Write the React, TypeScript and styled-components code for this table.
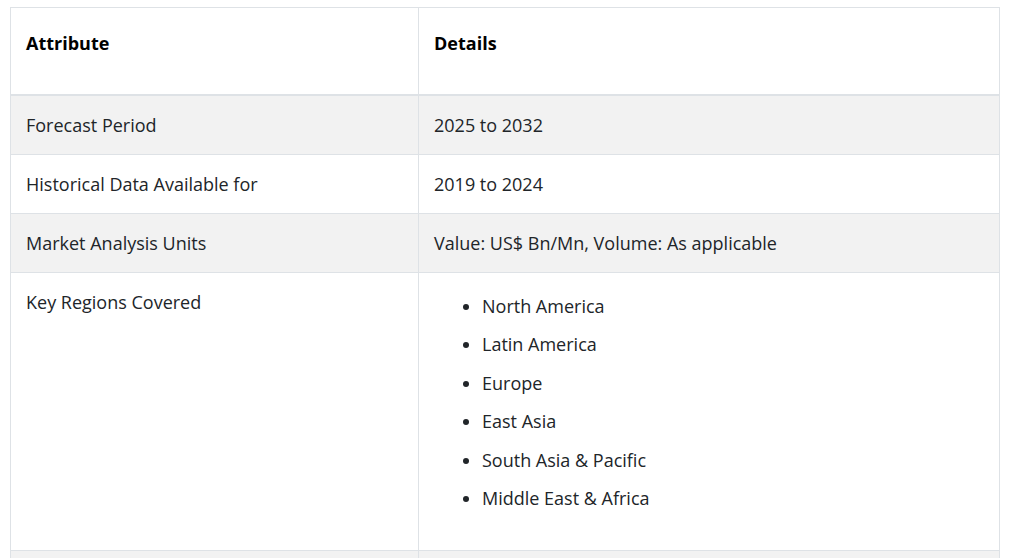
import React from "react";
import styled, { createGlobalStyle } from "styled-components";

const Global = createGlobalStyle`
  html, body { margin: 0; padding: 0; background: #fff; }
  body { font-family: "Open Sans", "Noto Sans", sans-serif; color: #212529; }
`;

const Page = styled.div`
  padding: 7px 0 0 10px;
`;

const Table = styled.table`
  width: 990px;
  border-collapse: collapse;
  table-layout: fixed;
  font-size: 18px;
  line-height: 24px;
`;

const HeadCell = styled.th`
  text-align: left;
  font-weight: 700;
  color: #000;
  padding: 23px 15px 39px;
  border: 1px solid #dee2e6;
  border-bottom: 2px solid #dee2e6;
  vertical-align: top;
`;

const Row = styled.tr<{ $shade?: boolean }>`
  background: ${(p) => (p.$shade ? "#f2f2f2" : "#fff")};
`;

const Cell = styled.td`
  padding: 17px 15px;
  border: 1px solid #dee2e6;
  vertical-align: top;
  height: 24px;
`;

const List = styled.ul`
  margin: 4px 0 0;
  padding: 0 0 9px 48px;
  list-style: disc;
`;

const Item = styled.li`
  margin-bottom: 14.4px;
  padding-left: 0;
`;

const rows = [
  ["Forecast Period", "2025 to 2032"],
  ["Historical Data Available for", "2019 to 2024"],
  ["Market Analysis Units", "Value: US$ Bn/Mn, Volume: As applicable"],
];

const regions = [
  "North America",
  "Latin America",
  "Europe",
  "East Asia",
  "South Asia & Pacific",
  "Middle East & Africa",
];

export default function App() {
  return (
    <Page>
      <Global />
      <Table>
        <colgroup>
          <col style={{ width: 408 }} />
          <col />
        </colgroup>
        <thead>
          <tr>
            <HeadCell>Attribute</HeadCell>
            <HeadCell>Details</HeadCell>
          </tr>
        </thead>
        <tbody>
          {rows.map((r, i) => (
            <Row key={r[0]} $shade={i % 2 === 0}>
              <Cell>{r[0]}</Cell>
              <Cell>{r[1]}</Cell>
            </Row>
          ))}
          <Row>
            <Cell>Key Regions Covered</Cell>
            <Cell>
              <List>
                {regions.map((g) => (
                  <Item key={g}>{g}</Item>
                ))}
              </List>
            </Cell>
          </Row>
          <Row $shade>
            <Cell />
            <Cell />
          </Row>
        </tbody>
      </Table>
    </Page>
  );
}
